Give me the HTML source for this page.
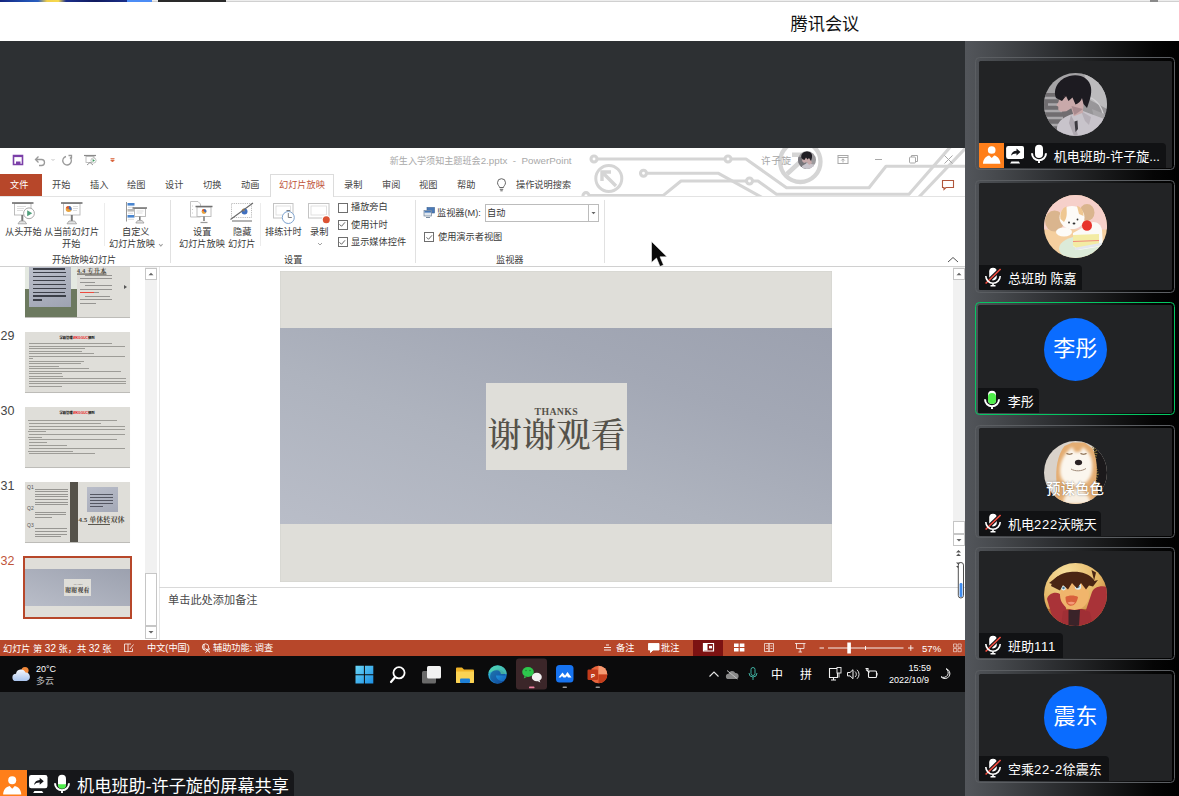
<!DOCTYPE html>
<html lang="zh-CN">
<head>
<meta charset="utf-8">
<title>腾讯会议</title>
<style>
*{box-sizing:border-box;margin:0;padding:0}
html,body{width:1179px;height:796px;overflow:hidden}
body{position:relative;background:#2d3033;font-family:"Liberation Sans","Noto Sans CJK SC",sans-serif;color:#444}
.abs{position:absolute}
.t{position:absolute;white-space:nowrap;line-height:1;}
.c{transform:translateY(-40%)}
.rt{font-size:9.200px;color:#3a3a3a}
.cb{position:absolute;width:10px;height:10px;border:1px solid #6e6e6e;background:#fff}
.cb svg{position:absolute;left:-0.500px;top:-0.500px}
.sb{position:absolute;background:#fff;border:1px solid #c6c6c6}
.sb svg{position:absolute;left:0;top:0}
.th{position:absolute;left:25px;width:105px;height:59.500px;background:#dfded9;box-shadow:0 0.500px 0.500px #bdbcb8;overflow:hidden}
.num{font-size:12.500px;color:#454545}
.ln i{position:absolute;display:block;background:currentColor;opacity:.9}
.dg{font-size:10px}
.st{font-size:9.200px;color:#fff}
.dd{display:inline-block;width:2.6px;height:2.6px;border-right:0.8px solid #999;border-bottom:0.8px solid #999;transform:rotate(45deg) translate(1.5px,-3.5px);margin-left:1.5px}
.tab{font-size:9.2px;color:#444}
/* top */
#topbar{left:0;top:0;width:1179px;height:41px;background:#fff}
#title{left:790.500px;top:16px;font-size:17.200px;color:#111;letter-spacing:0}
/* ppt window */
#ppt{left:0;top:148px;width:965px;height:507px;background:#fff;overflow:hidden}
/* taskbar */
#taskbar{left:0;top:655.700px;width:965px;height:36px;background:#0b0b0c}
/* sidebar */
#side{left:965px;top:41px;width:214px;height:755px;background:linear-gradient(90deg,#53565b 0%,#46494d 15%,#2e3033 40%,#18191a 65%,#050505 88%,#000 100%)}
.card{position:absolute;left:975px;width:200px;height:113px;border:1px solid #5b5e62;border-radius:4.500px}
.card.g{border:1.600px solid #05c763}
.card .in{position:absolute;left:2.500px;top:2.500px;right:2px;bottom:1.300px;background:#222325;border-radius:1.500px;overflow:hidden}
.card.g .in{left:2.200px;top:2.200px;right:1.700px;bottom:1px}
.av{position:absolute;left:65.500px;top:12.300px;width:63px;height:63px}
.bl{position:absolute;left:65.500px;top:12.300px;width:63px;height:63px;border-radius:50%;background:#0a6cff;color:#fff;font-size:22px;line-height:62px;text-align:center}
.lb{position:absolute;left:0;bottom:0;height:25px;background:#111214;border-top-right-radius:4px}
.ds{letter-spacing:0.7px}
.nm{font-size:13px;color:#fff;top:12.100px}
</style>
</head>
<body>
<div id="topbar" class="abs"></div>
<div id="title" class="t">腾讯会议</div>

<div id="ppt" class="abs"></div>
<!-- circuit decoration -->
<svg class="abs" style="left:0;top:148px" width="965" height="48" viewBox="0 148 965 48" fill="none" stroke="#d5d5d5" stroke-width="3.1" stroke-linejoin="round">
  <path d="M597 159H725M731 159H746L786.5 187.7H869L886 166.2H966"/>
  <circle cx="594" cy="159" r="3"/><circle cx="728" cy="159" r="3"/>
  <path d="M646.5 173.3H718.5L763 198"/>
  <circle cx="643.5" cy="173.3" r="3"/>
  <path d="M589 195.6H663L681 181H746.400M752.600 181H758L776.500 194.300H909L952 145"/>
  <circle cx="586" cy="195.6" r="3"/><circle cx="749.5" cy="181" r="3"/>
  <path d="M919 197L966 147.7"/>
  <circle cx="608.8" cy="178.4" r="13" stroke-width="3"/>
  <path d="M616 186L603 173M602 181V172H611" stroke-width="3.4" stroke-linejoin="miter"/>
  <circle cx="800.3" cy="161.8" r="20.2" stroke-width="4.3"/>
  <path d="M787 174L806 156.500M792 154.800H807.500V169" stroke-width="4.6" stroke-linejoin="miter"/>
</svg>
<div class="abs" style="left:0;top:196px;width:965px;height:1px;background:#e3e3e3"></div>
<!-- quick access -->
<svg class="abs" style="left:0;top:148px" width="160" height="26" viewBox="0 148 160 26" fill="none">
  <path d="M13.5 155.5h9v9h-9z" stroke="#7b3fa8" stroke-width="1.6"/><rect x="14" y="155.5" width="8" height="1.6" fill="#7b3fa8"/><rect x="16" y="161.5" width="4.5" height="3" fill="#7b3fa8"/>
  <path d="M36 159.5h5.5a3 3 0 0 1 0 6H39M38.5 156.5L35.5 159.5L38.5 162.5" stroke="#9a9a9a" stroke-width="1.3"/>
  <path d="M51.5 159l1.5 1.5 1.5-1.5" stroke="#b5b5b5" stroke-width="0.8"/>
  <path d="M66 156.5a4.3 4.3 0 1 0 4 1M68.5 155.5h3v3" stroke="#9a9a9a" stroke-width="1.3"/>
  <path d="M84 155.5h12" stroke="#8a8a8a" stroke-width="1.2"/><rect x="86" y="156.5" width="8" height="6" stroke="#b0b0b0" stroke-width="0.8"/><path d="M87 165l3-2.5 3 2.5" stroke="#8a8a8a" stroke-width="0.9"/><circle cx="93.5" cy="160.5" r="2.6" fill="#fff" stroke="#9a9a9a" stroke-width="0.6"/><path d="M92.6 159v3l2.4-1.5z" fill="#3a9a5c"/>
  <path d="M110.5 158.5h4M110.7 160h3.6l-1.8 2z" stroke="#d9623a" stroke-width="0.8" fill="#d9623a"/>
</svg>
<div class="t c" style="left:389.7px;top:159.8px;font-size:9.1px;color:#a9a9a9">新生入学须知主题班会<span style="font-size:9.8px">2.pptx&nbsp; -&nbsp; PowerPoint</span></div>
<div class="t c" style="left:761px;top:160px;font-size:9.6px;color:#a5a5a5;letter-spacing:0.6px">许子旋</div>
<svg class="abs" style="left:798.3px;top:150.6px" width="18" height="18" viewBox="0 0 18 18"><defs><clipPath id="ca"><circle cx="9" cy="9" r="9"/></clipPath></defs><g clip-path="url(#ca)"><rect width="18" height="18" fill="#9c9a9d"/><rect x="0" y="6" width="8" height="12" fill="#77757a"/><path d="M4 15l5-3 9 2v4H4z" fill="#c9c5cc"/><path d="M5 6l-1 4 2 2 3-1 2 3 3-2-2-6z" fill="#c7a9aa"/><path d="M3.5 7c-1-3 1-6 5-6.5 3-.5 5 1 5.5 3.5.3 2-.3 4-1 6l-2-3-1.5 1.500-1.5-2-1.5 2.5-1.500-.5z" fill="#1f1d23"/></g></svg>
<svg class="abs" style="left:830px;top:150px" width="134" height="44" viewBox="830 150 134 44" fill="none" stroke="#a8a8a8" stroke-width="1">
  <rect x="838" y="155.5" width="10" height="8"/><path d="M838 157.5h10M843 162.5v-3.5M841.3 160.5l1.7-1.7 1.7 1.7"/>
  <path d="M875 159.5h7"/>
  <rect x="909.5" y="157" width="6" height="6" rx="1"/><path d="M911.5 157v-1.5h6v6h-2"/>
  <path d="M944.5 155.5l8 8M952.5 155.5l-8 8"/>
  <path d="M942.5 180.5h11v7h-7.5l-2 2v-2h-1.5z" stroke="#b0563c" stroke-width="1.1"/>
</svg>
<!-- tabs -->
<div class="abs" style="left:0;top:174px;width:42px;height:22px;background:#b7472a"></div>
<div class="t c tab" style="left:10px;top:185px;color:#fff">文件</div>
<div class="t c tab" style="left:52px;top:185px">开始</div>
<div class="t c tab" style="left:90px;top:185px">插入</div>
<div class="t c tab" style="left:127px;top:185px">绘图</div>
<div class="t c tab" style="left:165px;top:185px">设计</div>
<div class="t c tab" style="left:203px;top:185px">切换</div>
<div class="t c tab" style="left:241px;top:185px">动画</div>
<div class="abs" style="left:270px;top:173.5px;width:64px;height:23.5px;background:#fff;border:1px solid #dcdcdc;border-bottom:none"></div>
<div class="t c tab" style="left:279px;top:185px;color:#c0553a">幻灯片放映</div>
<div class="t c tab" style="left:344px;top:185px">录制</div>
<div class="t c tab" style="left:382px;top:185px">审阅</div>
<div class="t c tab" style="left:419px;top:185px">视图</div>
<div class="t c tab" style="left:457px;top:185px">帮助</div>
<svg class="abs" style="left:495px;top:176px" width="14" height="17" viewBox="495 176 14 17" fill="none" stroke="#555" stroke-width="0.9"><path d="M499.5 187.5c0-1.6-2-2.3-2-4.8a4 4 0 0 1 8 0c0 2.500-2 3.200-2 4.800zM499.800 189.300h3.400M500.300 190.800h2.400"/></svg>
<div class="t c tab" style="left:516px;top:185px">操作说明搜索</div>
<!-- ribbon -->
<div class="abs" style="left:0;top:265.5px;width:965px;height:1.2px;background:#d0d0d0"></div>
<div class="abs" style="left:104px;top:203px;width:1px;height:43px;background:#ececec"></div>
<div class="abs" style="left:170px;top:200px;width:1px;height:63px;background:#e1e1e1"></div>
<div class="abs" style="left:260px;top:203px;width:1px;height:43px;background:#ececec"></div>
<div class="abs" style="left:415px;top:200px;width:1px;height:63px;background:#e1e1e1"></div>
<div class="abs" style="left:604px;top:200px;width:1px;height:63px;background:#e1e1e1"></div>
<svg class="abs" style="left:0;top:198px" width="340" height="32" viewBox="0 198 340 32" fill="none">
  <!-- from beginning -->
  <rect x="14.5" y="203.5" width="16.5" height="11.5" fill="#fff" stroke="#b5b5b5" stroke-width="0.9"/>
  <path d="M17 206.500h9M17 208.500h7M17 210.500h6" stroke="#d4d4d4" stroke-width="0.8"/>
  <path d="M12 203h21.500" stroke="#707070" stroke-width="1.600"/>
  <path d="M22.300 215v6" stroke="#7a7a7a" stroke-width="2"/>
  <path d="M18 223.800l2-2.800h4.600l2 2.800z" fill="#e4e4e4" stroke="#9a9a9a" stroke-width="0.8"/>
  <circle cx="29" cy="213.300" r="5.400" fill="#fff" stroke="#a0a0a0" stroke-width="0.9"/>
  <path d="M27.200 210.300v6l5-3z" fill="#4f9e7b"/>
  <!-- from current -->
  <rect x="63.500" y="203.500" width="16.500" height="11.500" fill="#fff" stroke="#b5b5b5" stroke-width="0.900"/>
  <path d="M73 206.500h5M73 208.500h5M73 210.500h4" stroke="#d4d4d4" stroke-width="0.800"/>
  <path d="M61 203h21.500" stroke="#707070" stroke-width="1.600"/>
  <circle cx="68.700" cy="209" r="3" fill="#e8a33d"/><path d="M68.700 209v-3a3 3 0 0 1 2.600 4.500z" fill="#3f6fc0"/><path d="M68.700 209l-2.800-1a3 3 0 0 1 2.800-2z" fill="#d9502f"/>
  <path d="M71.800 215v6" stroke="#7a7a7a" stroke-width="2"/>
  <path d="M67 223.800l2-2.800h5.600l2 2.800z" fill="#e4e4e4" stroke="#9a9a9a" stroke-width="0.800"/>
  <!-- custom -->
  <path d="M126.500 202v19.500" stroke="#8a8a8a" stroke-width="0.900"/>
  <rect x="127.500" y="203" width="7" height="2.600" fill="#4a86d0"/><rect x="127.500" y="209" width="7" height="2.600" fill="#b9b9b9"/><rect x="127.500" y="215" width="7" height="2.600" fill="#4a86d0"/>
  <path d="M128 207.300h6M128 213.300h5M128 219.300h6" stroke="#cfcfcf" stroke-width="0.800"/>
  <rect x="134.500" y="208.500" width="11" height="8" fill="#fff" stroke="#b5b5b5" stroke-width="0.900"/>
  <path d="M136.500 211h7M136.500 213h6" stroke="#d4d4d4" stroke-width="0.800"/>
  <path d="M132.500 208h14.500" stroke="#707070" stroke-width="1.500"/>
  <path d="M139.800 216.500v4" stroke="#7a7a7a" stroke-width="1.600"/>
  <path d="M135.800 223l1.800-2.400h4.600l1.800 2.400z" fill="#e4e4e4" stroke="#9a9a9a" stroke-width="0.800"/>
  <!-- setup -->
  <path d="M190.500 201.500h7.500l2.500 2.500v13h-10z" fill="#fff" stroke="#bdbdbd" stroke-width="0.900"/>
  <path d="M192 206h2M192 209.500h2M192 213h2" stroke="#c4c4c4" stroke-width="0.900" stroke-dasharray="1 1"/>
  <rect x="197" y="207" width="14" height="9.500" fill="#fff" stroke="#b5b5b5" stroke-width="0.900"/>
  <path d="M195.500 206.500h17" stroke="#707070" stroke-width="1.500"/>
  <circle cx="204" cy="211.500" r="2.400" fill="#e8a33d"/><path d="M204 211.500v-2.400a2.400 2.400 0 0 1 2 3.700z" fill="#3f6fc0"/><path d="M204 211.500l-2.200-.9a2.400 2.400 0 0 1 2.200-1.500z" fill="#d9502f"/>
  <path d="M204 216.500v4.500" stroke="#7a7a7a" stroke-width="1.500"/>
  <path d="M200.500 222.500h7" stroke="#9a9a9a" stroke-width="1.200"/>
  <!-- hide -->
  <rect x="231.500" y="203.500" width="20" height="14" fill="#fff" stroke="#a9a9a9" stroke-width="0.800" stroke-dasharray="1.200 1"/>
  <circle cx="244.500" cy="211.500" r="3" fill="#3f6fc0"/><path d="M244.500 211.500l-2.800-1.200a3 3 0 0 1 2.400-1.800z" fill="#e8a33d"/>
  <path d="M232 221h20M230.500 219.500L253 203" stroke="#6a6a6a" stroke-width="1.100"/>
  <!-- rehearse -->
  <rect x="273.500" y="203.500" width="19.500" height="14.500" fill="#fff" stroke="#c4c4c4" stroke-width="1"/>
  <rect x="276" y="206" width="14.500" height="9" fill="#fff" stroke="#dadada" stroke-width="0.800"/>
  <circle cx="288.300" cy="217.500" r="6" fill="#fff" stroke="#7ea3cf" stroke-width="1"/>
  <path d="M288.300 213v4.500h3.500M286.500 210.500h3.600" stroke="#6f6f6f" stroke-width="0.900"/>
  <!-- record -->
  <rect x="308.500" y="203.500" width="20.500" height="14.500" fill="#fff" stroke="#c4c4c4" stroke-width="1"/>
  <rect x="311" y="206" width="15.500" height="9" fill="#fff" stroke="#dadada" stroke-width="0.800"/>
  <circle cx="326.300" cy="219.700" r="4.600" fill="#fff"/><circle cx="326.300" cy="219.700" r="3.500" fill="#dc5334"/>
</svg>
<div class="t c rt" style="left:5px;top:232px">从头开始</div>
<div class="t c rt" style="left:44px;top:232px">从当前幻灯片</div>
<div class="t c rt" style="left:62px;top:243.500px">开始</div>
<div class="t c rt" style="left:122px;top:232px">自定义</div>
<div class="t c rt" style="left:109px;top:243.500px">幻灯片放映<span class="dd"></span></div>
<div class="t c rt" style="left:193px;top:232px">设置</div>
<div class="t c rt" style="left:179px;top:243.500px">幻灯片放映</div>
<div class="t c rt" style="left:233px;top:232px">隐藏</div>
<div class="t c rt" style="left:228px;top:243.500px">幻灯片</div>
<div class="t c rt" style="left:265px;top:232px">排练计时</div>
<div class="t c rt" style="left:310px;top:232px">录制</div>
<svg class="abs" style="left:316px;top:241px" width="8" height="6" fill="none" stroke="#8a8a8a" stroke-width="0.800"><path d="M2 2l2 2 2-2"/></svg>
<div class="cb" style="left:337.500px;top:202.500px"></div>
<div class="cb" style="left:337.500px;top:219.500px"><svg width="9" height="9" fill="none" stroke="#555" stroke-width="0.900"><path d="M1.500 4.300l2 2 3.500-4"/></svg></div>
<div class="cb" style="left:337.500px;top:237px"><svg width="9" height="9" fill="none" stroke="#555" stroke-width="0.900"><path d="M1.500 4.300l2 2 3.500-4"/></svg></div>
<div class="t c rt" style="left:351px;top:207px">播放旁白</div>
<div class="t c rt" style="left:351px;top:224.500px">使用计时</div>
<div class="t c rt" style="left:351px;top:242px">显示媒体控件</div>
<div class="t c rt" style="left:52px;top:259.500px">开始放映幻灯片</div>
<div class="t c rt" style="left:284px;top:259.500px">设置</div>
<div class="t c rt" style="left:496px;top:259.500px">监视器</div>
<svg class="abs" style="left:423px;top:206px" width="13" height="13" viewBox="423 206 13 13"><rect x="427" y="207.500" width="7.500" height="5.500" fill="#4a7ab8" stroke="#39608f" stroke-width="0.600"/><rect x="424" y="210.500" width="7.500" height="5.500" fill="#dfe6ee" stroke="#6b7f96" stroke-width="0.700"/><rect x="424.500" y="211" width="6.500" height="1.600" fill="#4a7ab8"/><path d="M426 217.500h4" stroke="#6b7f96" stroke-width="0.900"/></svg>
<div class="t c rt" style="left:437px;top:213px">监视器(M):</div>
<div class="abs" style="left:484.500px;top:204px;width:114px;height:18px;border:1px solid #bcbcbc;background:#fff"></div>
<div class="abs" style="left:588px;top:204px;width:1px;height:18px;background:#bcbcbc"></div>
<svg class="abs" style="left:590px;top:210px" width="8" height="6"><path d="M1.500 2h4l-2 2.200z" fill="#666"/></svg>
<div class="t c rt" style="left:487px;top:213px">自动</div>
<div class="cb" style="left:424px;top:232px"><svg width="9" height="9" fill="none" stroke="#555" stroke-width="0.900"><path d="M1.500 4.300l2 2 3.500-4"/></svg></div>
<div class="t c rt" style="left:438px;top:237px">使用演示者视图</div>
<svg class="abs" style="left:946px;top:255px" width="14" height="9" fill="none" stroke="#555" stroke-width="1"><path d="M2 7l5-4.500 5 4.500"/></svg>

<!-- thumbnails panel -->
<div class="abs" style="left:158.500px;top:267px;width:1px;height:373px;background:#e6e6e6"></div>
<div class="abs" style="left:144.500px;top:267px;width:12px;height:372px;background:#f1f1f1"></div>
<div class="sb" style="left:144.500px;top:267.500px;width:12px;height:12px"><svg width="10" height="10"><path d="M2.500 6.300h5L5 3.700z" fill="#666"/></svg></div>
<div class="sb" style="left:144.500px;top:572.500px;width:12px;height:53.500px"></div>
<div class="sb" style="left:144.500px;top:626px;width:12px;height:12.500px"><svg width="10" height="10"><path d="M2.500 4h5L5 6.600z" fill="#666"/></svg></div>
<div class="th" style="top:267px;height:49.500px;background:#dfded9">
  <div class="abs" style="left:0;top:0;width:52px;height:22px;background:#e4e9e1"></div>
  <div class="abs" style="left:0;top:22px;width:52px;height:27.500px;background:#6c795f"></div>
  <div class="abs" style="left:4px;top:0;width:42px;height:40px;background:linear-gradient(160deg,#bcc0cb,#9ea3b2)"></div>
</div>
<div class="t c" style="left:77px;top:269.500px;font-size:6.100px;color:#4e4a3f;font-family:'Liberation Serif','Noto Serif CJK SC',serif;font-weight:bold;text-decoration:underline;letter-spacing:0.300px">4.4 专升本</div>
<div class="ln"><i style="left:33px;top:268.4px;width:32px;height:1.300px;color:#30333c"></i><i style="left:33px;top:272.2px;width:33px;height:1.300px;color:#30333c"></i><i style="left:33px;top:276.1px;width:33px;height:1.300px;color:#30333c"></i><i style="left:33px;top:280.0px;width:32px;height:1.300px;color:#30333c"></i><i style="left:33px;top:283.8px;width:33px;height:1.300px;color:#30333c"></i><i style="left:33px;top:287.7px;width:33px;height:1.300px;color:#30333c"></i><i style="left:33px;top:291.6px;width:32px;height:1.300px;color:#30333c"></i><i style="left:33px;top:295.4px;width:33px;height:1.300px;color:#30333c"></i><i style="left:33px;top:299.3px;width:9px;height:1.300px;color:#30333c"></i><i style="left:85px;top:274.6px;width:27px;height:0.9px;color:#8d8c88"></i><i style="left:80px;top:278.2px;width:32px;height:0.9px;color:#8d8c88"></i><i style="left:80px;top:281.6px;width:15px;height:0.9px;color:#8d8c88"></i><i style="left:85px;top:285.2px;width:27px;height:0.9px;color:#8d8c88"></i><i style="left:80px;top:288.6px;width:32px;height:0.9px;color:#8d8c88"></i><i style="left:85px;top:295.6px;width:25px;height:0.9px;color:#8d8c88"></i><i style="left:80px;top:299.2px;width:32px;height:0.9px;color:#8d8c88"></i><i style="left:80px;top:302.6px;width:16px;height:0.9px;color:#8d8c88"></i><i style="left:80px;top:292px;width:14px;height:1.200px;color:#ee3b2f"></i><i style="left:94px;top:292px;width:5px;height:1px;color:#8d8c88"></i></div>
<svg class="abs" style="left:123px;top:284px" width="5" height="6"><path d="M1 1v4l3-2z" fill="#555"/></svg>
<div class="t c num" style="left:0.500px;top:335px">29</div>
<div class="th" style="top:332px"></div>
<div class="t c" style="left:59.500px;top:338px;font-size:3.400px;font-weight:bold;color:#111;letter-spacing:-0.100px">学籍管理<span style="color:#e8201a">WKGGUC</span>细则</div>
<div class="ln"><i style="left:28.5px;top:342.8px;width:83.5px;height:1.3px;color:#96958f"></i><i style="left:29px;top:345.8px;width:96px;height:0.9px;color:#96958f"></i><i style="left:29px;top:348.2px;width:56px;height:0.9px;color:#96958f"></i><i style="left:29px;top:350.8px;width:53px;height:0.9px;color:#96958f"></i><i style="left:29px;top:353.4px;width:65px;height:0.9px;color:#96958f"></i><i style="left:29px;top:356.1px;width:96px;height:0.9px;color:#96958f"></i><i style="left:29px;top:358.2px;width:4px;height:0.9px;color:#96958f"></i><i style="left:29px;top:360.8px;width:55px;height:0.9px;color:#96958f"></i><i style="left:29px;top:363.4px;width:52px;height:0.9px;color:#96958f"></i><i style="left:29px;top:365.8px;width:30px;height:0.9px;color:#96958f"></i><i style="left:29px;top:368.4px;width:60px;height:0.9px;color:#96958f"></i><i style="left:29px;top:370.8px;width:92px;height:0.9px;color:#96958f"></i><i style="left:29px;top:373.2px;width:33px;height:0.9px;color:#96958f"></i><i style="left:29px;top:375.9px;width:34px;height:0.9px;color:#96958f"></i><i style="left:29px;top:378.4px;width:97px;height:0.9px;color:#96958f"></i><i style="left:29px;top:381.1px;width:97px;height:0.9px;color:#96958f"></i><i style="left:29px;top:383.4px;width:97px;height:0.9px;color:#96958f"></i><i style="left:29px;top:385.9px;width:33px;height:0.9px;color:#96958f"></i></div>
<div class="t c num" style="left:0.500px;top:410px">30</div>
<div class="th" style="top:407px"></div>
<div class="t c" style="left:59.500px;top:413px;font-size:3.400px;font-weight:bold;color:#111;letter-spacing:-0.100px">学籍管理<span style="color:#e8201a">WKGGUC</span>细则</div>
<div class="ln"><i style="left:28px;top:420.2px;width:89px;height:1.3px;color:#96958f"></i><i style="left:29px;top:423.1px;width:72px;height:0.9px;color:#96958f"></i><i style="left:29px;top:425.8px;width:96px;height:0.9px;color:#96958f"></i><i style="left:29px;top:428.6px;width:96px;height:0.9px;color:#96958f"></i><i style="left:28px;top:431.4px;width:18px;height:0.9px;color:#96958f"></i><i style="left:29px;top:434.1px;width:96px;height:0.9px;color:#96958f"></i><i style="left:28px;top:436.7px;width:14px;height:0.9px;color:#96958f"></i><i style="left:29px;top:439.4px;width:88px;height:0.9px;color:#96958f"></i><i style="left:29px;top:442.4px;width:18px;height:0.9px;color:#96958f"></i><i style="left:29px;top:445.1px;width:38px;height:0.9px;color:#96958f"></i><i style="left:29px;top:447.9px;width:96px;height:0.9px;color:#96958f"></i><i style="left:28px;top:450.6px;width:45px;height:0.9px;color:#96958f"></i><i style="left:29px;top:453.2px;width:66px;height:0.9px;color:#96958f"></i></div>
<div class="t c num" style="left:0.500px;top:485px">31</div>
<div class="th" style="top:482px">
  <div class="abs" style="left:45.200px;top:0;width:7.600px;height:59.500px;background:#55524a"></div>
  <div class="abs" style="left:62px;top:5px;width:30.500px;height:25px;background:linear-gradient(160deg,#b9bdc9,#a4a9b7)"></div>
</div>
<div class="t c" style="left:27px;top:487px;font-size:5px;color:#555">Q1</div>
<div class="t c" style="left:27px;top:508px;font-size:5px;color:#555">Q2</div>
<div class="t c" style="left:27px;top:525px;font-size:5px;color:#555">Q3</div>
<div class="t c" style="left:78.500px;top:520px;font-size:7.100px;color:#4e4a3f;font-family:'Liberation Serif','Noto Serif CJK SC',serif;font-weight:bold">4.5 单休转双休</div>
<div class="ln"><i style="left:35px;top:488.6px;width:32.5px;height:0.9px;color:#8f8e89"></i><i style="left:35px;top:491.2px;width:32.5px;height:0.9px;color:#8f8e89"></i><i style="left:35px;top:493.8px;width:32.5px;height:0.9px;color:#8f8e89"></i><i style="left:35px;top:496.4px;width:32.5px;height:0.9px;color:#8f8e89"></i><i style="left:35px;top:498.9px;width:32.5px;height:0.9px;color:#8f8e89"></i><i style="left:35px;top:501.6px;width:32.5px;height:0.9px;color:#8f8e89"></i><i style="left:35px;top:504.2px;width:32.5px;height:0.9px;color:#8f8e89"></i><i style="left:35px;top:511.6px;width:31px;height:0.9px;color:#8f8e89"></i><i style="left:35px;top:514.3px;width:31px;height:0.9px;color:#8f8e89"></i><i style="left:35px;top:517.1px;width:17px;height:0.9px;color:#8f8e89"></i><i style="left:35px;top:528.0px;width:32px;height:0.9px;color:#8f8e89"></i><i style="left:35px;top:530.8px;width:32px;height:0.9px;color:#8f8e89"></i><i style="left:35px;top:533.5px;width:32px;height:0.9px;color:#8f8e89"></i><i style="left:35px;top:536.3px;width:26px;height:0.9px;color:#8f8e89"></i><i style="left:90px;top:493.9px;width:23px;height:1.1px;color:#4a4d58"></i><i style="left:90px;top:496.8px;width:23px;height:1.1px;color:#4a4d58"></i><i style="left:90px;top:499.8px;width:23px;height:1.1px;color:#4a4d58"></i><i style="left:90px;top:502.6px;width:23px;height:1.1px;color:#4a4d58"></i><i style="left:90px;top:505.6px;width:13px;height:1.1px;color:#4a4d58"></i><i style="left:88px;top:524px;width:22px;height:1px;color:#4e4a3f"></i></div>
<div class="t c num" style="left:0.500px;top:560px;color:#c0553a">32</div>
<div class="abs" style="left:23px;top:555.500px;width:109px;height:63px;border:2px solid #b7472a;background:#dfded9"></div>
<div class="abs" style="left:25px;top:568.700px;width:105px;height:37px;background:linear-gradient(to top right,#b9bdc8,#9ca1af)"></div>
<div class="abs" style="left:64px;top:579px;width:26.500px;height:16.500px;background:#dfded9"></div>
<div class="t c" style="left:65px;top:588.500px;font-size:6.100px;font-weight:bold;color:#3e3c36;font-family:'Liberation Serif','Noto Serif CJK SC',serif">谢谢观看</div>
<div class="t c" style="left:73.500px;top:584px;font-size:2.200px;color:#3e3c36;font-family:'Liberation Serif',serif">THANKS</div>
<!-- main slide -->
<div class="abs" style="left:280px;top:270.5px;width:552.4px;height:311px;background:#dfded9;box-shadow:inset 0 0 0 0.5px #d2d1cd"></div>
<div class="abs" style="left:280px;top:328px;width:552.4px;height:196px;background:linear-gradient(to top right,#b9bdc8 0%,#aeb3be 40%,#a3a8b5 70%,#9ca1af 100%)"></div>
<div class="abs" style="left:486px;top:382.5px;width:141px;height:87.5px;background:#dfded9"></div>
<div class="t c" style="left:534.600px;top:410.800px;font-size:9.800px;letter-spacing:0.350px;font-weight:bold;color:#55524a;font-family:'Liberation Serif',serif">THANKS</div>
<div class="t c" style="left:487.500px;top:429px;font-size:34.400px;color:#55524a;font-family:'Noto Serif CJK SC','Liberation Serif',serif;font-weight:500">谢谢观看</div>
<div class="abs" style="left:159px;top:587px;width:806px;height:1px;background:#d9d9d9"></div>
<div class="t c" style="left:168px;top:599px;font-size:11.200px;color:#4a4a4a">单击此处添加备注</div>
<!-- right scrollbar -->
<div class="abs" style="left:952.500px;top:267px;width:12px;height:279px;background:#f1f1f1"></div>
<div class="sb" style="left:952.500px;top:267.500px;width:12px;height:12px"><svg width="10" height="10"><path d="M2.500 6.300h5L5 3.700z" fill="#666"/></svg></div>
<div class="sb" style="left:952.500px;top:521px;width:12px;height:12.500px"></div>
<div class="sb" style="left:952.500px;top:533.500px;width:12px;height:12.500px"><svg width="10" height="10"><path d="M2.500 4h5L5 6.600z" fill="#666"/></svg></div>
<svg class="abs" style="left:952px;top:548px" width="13" height="52" viewBox="952 548 13 52" fill="none"><path d="M956 552.500l2.500-2.500 2.500 2.500zM956 556l2.500-2.500 2.500 2.500z" fill="#555"/><path d="M956 562.500l2.500 2.500 2.500-2.500zM956 566l2.500 2.500 2.500-2.500z" fill="#555"/><rect x="958.300" y="562.500" width="5.200" height="35.500" rx="2.600" fill="#fff" stroke="#3c3c3c" stroke-width="0.900"/><rect x="959.600" y="583" width="2.800" height="14" rx="1.200" fill="#3f8cf0"/></svg>

<!-- status bar -->
<div class="abs" style="left:0;top:639.700px;width:965px;height:16px;background:#b7472a"></div>
<div class="abs" style="left:693.200px;top:639.700px;width:30px;height:16px;background:#7c1212"></div>
<div class="t c st" style="left:3px;top:648px">幻灯片 第 <span class="dg">32</span> 张，共 <span class="dg">32</span> 张</div>
<div class="t c st" style="left:147px;top:648px">中文(中国)</div>
<div class="t c st" style="left:213px;top:648px">辅助功能: 调查</div>
<div class="t c st" style="left:616px;top:648px">备注</div>
<div class="t c st" style="left:661px;top:648px">批注</div>
<div class="t c st" style="left:922px;top:648px;font-size:9.600px">57%</div>
<svg class="abs" style="left:0;top:640px" width="965" height="16" viewBox="0 640 965 16" fill="none" stroke="#fff" stroke-width="0.900">
  <path d="M124.500 644h3.500v7.500h-3.500zM128 644h3M128 651.500h4.500v-3M130 649l3.500-4.500" stroke-opacity="0.850"/>
  <circle cx="205.500" cy="647" r="3.200" stroke-opacity="0.900"/><path d="M204 644v6M205.500 648.500l4.500 4M210 648.500l-4.500 4" stroke-width="1"/>
  <path d="M604 647.500h7M604 650h7M606 645h3" />
  <path d="M648.500 643.500h10.500v6.500h-6l-2.500 2.500v-2.500h-2z" fill="#fff"/>
  <path d="M703.500 643.500h10v7.500h-10z" stroke-width="1.200"/><rect x="704" y="644" width="3.500" height="6.500" fill="#fff" stroke="none"/><rect x="709" y="645.800" width="3" height="2.600" fill="#fff" stroke="none"/>
  <path d="M734 643.500h4.600v3.400h-4.600zM739.800 643.500h4.600v3.400h-4.600zM734 648h4.600v3.400h-4.600zM739.800 648h4.600v3.400h-4.600z" fill="#fff" stroke="none"/>
  <path d="M764.500 643.500h4.500v8h-4.500zM769 643.500h4.500v8h-4.500zM766 646h2M766 648.500h2M770.500 646h2M770.500 648.500h2" stroke-opacity="0.850" stroke-width="0.800"/>
  <path d="M795 643.500h10.500M796.500 643.500v5h7.500v-5M800.200 648.500v3.500M798.500 652h3.500" stroke-opacity="0.850"/>
  <path d="M819.500 648h4.500M828 648h75.500M908 648h5.500M910.800 645.200v5.600M865.500 646v4" stroke-width="0.900"/>
  <rect x="847.300" y="642.500" width="3.600" height="11" fill="#fff" stroke="none"/>
  <path d="M953.500 644h3.200v3.200h-3.200zM958 644h3.200v3.200h-3.200zM953.500 648.500h3.200v3.200h-3.200zM958 648.500h3.200v3.200h-3.200z" stroke-opacity="0.800" stroke-width="0.700"/>
</svg>

<div id="taskbar" class="abs"></div>
<svg class="abs" style="left:0;top:656px" width="965" height="35" viewBox="0 656 965 35" fill="none">
  <defs>
    <linearGradient id="wg" x1="0" y1="0" x2="1" y2="1"><stop offset="0" stop-color="#6ad6f7"/><stop offset="1" stop-color="#1c8fe3"/></linearGradient>
    <linearGradient id="eg" x1="0" y1="0" x2="1" y2="1"><stop offset="0" stop-color="#3ad0c8"/><stop offset="0.500" stop-color="#1f8fd8"/><stop offset="1" stop-color="#0f56b3"/></linearGradient>
    <linearGradient id="cl" x1="0" y1="0" x2="0" y2="1"><stop offset="0" stop-color="#f4f7fc"/><stop offset="1" stop-color="#a9c4ee"/></linearGradient>
  </defs>
  <!-- weather -->
  <circle cx="25" cy="670.500" r="3.600" fill="#f2883a"/>
  <path d="M16 681a3.600 3.600 0 0 1 0-7.200 5 5 0 0 1 9.500-1.300 4.300 4.300 0 0 1 1 8.500z" fill="url(#cl)"/>
  <!-- windows -->
  <path d="M355.500 665.800h8.400v8.400h-8.400zM364.900 665.800h8.400v8.400h-8.400zM355.500 675.200h8.400v8.400h-8.400zM364.900 675.200h8.400v8.400h-8.400z" fill="url(#wg)"/>
  <!-- search -->
  <circle cx="399" cy="672.800" r="5.600" stroke="#fff" stroke-width="1.800"/><path d="M395 677.300l-4 4.700" stroke="#fff" stroke-width="2.200" stroke-linecap="round"/>
  <!-- task view -->
  <rect x="422" y="671" width="14" height="12.500" rx="1.500" fill="#6a6a6a"/><rect x="427" y="666" width="14" height="12.500" rx="1.500" fill="#f2f2f2"/>
  <!-- folder -->
  <path d="M456 668.500a1 1 0 0 1 1-1h5l2 2h9a1 1 0 0 1 1 1v11.500a1 1 0 0 1-1 1h-16a1 1 0 0 1-1-1z" fill="#f0b429"/><path d="M456 671.500h18v10.500a1 1 0 0 1-1 1h-16a1 1 0 0 1-1-1z" fill="#fbd354"/><rect x="460" y="678.500" width="10" height="4.500" rx="1" fill="#1e7fd6"/>
  <!-- edge -->
  <circle cx="497.500" cy="674.500" r="9.300" fill="url(#eg)"/><path d="M490.500 679c-1.500-5 2-9.500 7-9.500 4.500 0 7.500 2.800 8 6h-9.500c0 3 2.500 6 8 5.500-3 3.500-10.500 3.500-13.500-2z" fill="#123f86" fill-opacity="0.550"/><path d="M488.500 673c1-4.500 5-7.500 9.500-7.500 5 0 8.800 3.800 8.800 8.500h-6c0-2-1.500-3.800-4-3.800-3 0-5.500 2-8.300 2.800z" fill="#5fe0a0" fill-opacity="0.600"/>
  <!-- wechat -->
  <rect x="516" y="658.500" width="31" height="31" rx="3" fill="#3b2629"/>
  <ellipse cx="528" cy="672" rx="5.800" ry="5" fill="#2dc84d"/><path d="M524.500 676l-.8 2.600 3-1.600z" fill="#2dc84d"/>
  <ellipse cx="536.800" cy="677" rx="5" ry="4.300" fill="#f2f2f2"/><path d="M539.500 680.300l.8 2.200-2.800-1.400z" fill="#f2f2f2"/>
  <circle cx="526" cy="670.500" r="0.700" fill="#1a7c30"/><circle cx="530" cy="670.500" r="0.700" fill="#1a7c30"/>
  <rect x="529" y="686.500" width="5.500" height="1.800" rx="0.900" fill="#ee7fa0"/>
  <!-- tencent meeting -->
  <rect x="556" y="665" width="17.500" height="17.500" rx="3.500" fill="#1673f0"/><path d="M558.500 677.500l4-5 2.500 3 2.500-3.500 4 5.500h-3.500l-1-1.500-1.500 1.500h-2l-1.500-1.500-1.500 1.500z" fill="#fff"/>
  <rect x="562.500" y="686.500" width="4.500" height="1.600" rx="0.800" fill="#9a9a9a"/>
  <!-- ppt -->
  <circle cx="598.500" cy="674.500" r="8.800" fill="#e8643c"/><path d="M598.500 665.700a8.800 8.800 0 0 1 8.800 8.800h-8.800z" fill="#f59a72"/><path d="M598.500 674.500h8.800a8.800 8.800 0 0 1-8.800 8.800z" fill="#c43e1c"/>
  <rect x="587.500" y="669.500" width="10.500" height="10.500" rx="1.200" fill="#c13b1b"/>
  <rect x="595.500" y="686.500" width="4.500" height="1.600" rx="0.800" fill="#9a9a9a"/>
  <!-- tray -->
  <path d="M709.500 676.500l4.500-4.500 4.500 4.500" stroke="#e6e6e6" stroke-width="1.100"/>
  <path d="M728.500 679a2.600 2.600 0 0 1 0-5.200 3.600 3.600 0 0 1 6.800-.8 3 3 0 0 1 .6 6z" fill="#8a8a8a"/><path d="M727 670.500l10.500 8.500" stroke="#c0c0c0" stroke-width="1"/>
  <rect x="751" y="667.500" width="4" height="8" rx="2" stroke="#3fae9f" stroke-width="1"/><path d="M749 673a4 4 0 0 0 8 0M753 677v3" stroke="#3fae9f" stroke-width="1"/>
  <path d="M829.500 668.500h8v9h-8zM831 680h5M833.500 677.500v2.500" stroke="#f0f0f0" stroke-width="1.100"/><rect x="837" y="667.500" width="4" height="5.500" fill="#0b0b0c" stroke="#f0f0f0" stroke-width="0.900"/><path d="M839 673v4.500" stroke="#f0f0f0" stroke-width="0.900"/>
  <path d="M847.500 672.500h2.500l3-2.800v9l-3-2.800h-2.500z" stroke="#f0f0f0" stroke-width="1"/><path d="M855 671.500a3.500 3.500 0 0 1 0 5.500M857 669.800a6 6 0 0 1 0 9" stroke="#f0f0f0" stroke-width="0.900"/>
  <rect x="868.500" y="671" width="8" height="6.500" rx="1" stroke="#f0f0f0" stroke-width="1.100"/><path d="M877 673v2.500M866 669.500l3.500 3M865.500 668.500h2.500v2" stroke="#f0f0f0" stroke-width="1.100"/>
  <path d="M946 668.700a5 5 0 1 1-5 8 4.600 4.600 0 0 0 5-8z" stroke="#f0f0f0" stroke-width="1"/>
</svg>
<div class="t c" style="left:36px;top:668.500px;font-size:9px;color:#fff">20°C</div>
<div class="t c" style="left:36px;top:680.500px;font-size:9px;color:#bdbdbd">多云</div>
<div class="t c" style="left:591px;top:674.500px;font-size:6px;font-weight:bold;color:#fff">P</div>
<div class="t c" style="left:771px;top:674px;font-size:12px;color:#fff">中</div>
<div class="t c" style="left:800px;top:674px;font-size:12px;color:#fff">拼</div>
<div class="t c" style="left:908.500px;top:668px;font-size:9px;color:#fff">15:59</div>
<div class="t c" style="left:889px;top:680px;font-size:9px;color:#fff">2022/10/9</div>
<!--SIDE-START--><div id="side" class="abs"></div>
<div class="card" style="top:57.0px"><div class="in"><svg class="av" viewBox="0 0 63 63"><defs><clipPath id="c1"><circle cx="31.500" cy="31.500" r="31.500"/></clipPath><linearGradient id="g1" x1="0" y1="0" x2="1" y2="1"><stop offset="0" stop-color="#a9a8aa"/><stop offset="1" stop-color="#8f8d90"/></linearGradient><filter id="b1"><feGaussianBlur stdDeviation="0.7"/></filter></defs>
<g clip-path="url(#c1)"><rect width="63" height="63" fill="url(#g1)"/><g filter="url(#b1)"><rect x="0" y="20" width="30" height="43" fill="#6f6d70"/><path d="M0 25h16M4 31.500h14M0 38h18M3 45h16M6 52h10" stroke="#a9a7aa" stroke-width="2.400"/><path d="M40 0l23 12v24l-17-9z" fill="#bcbbbd"/><path d="M45 24c8 3 13 10 15 20" stroke="#d2d1d3" stroke-width="1.300" fill="none"/><path d="M48 36l15 6v12l-12-6z" fill="#a6a4a7"/></g>
<path d="M13 54c2-7 8-11 16-13l10-3 24 9v16H13z" fill="#c8c4cb"/><path d="M27 42l4 8 3 13h-4l-5-13z" fill="#aea8b0"/><path d="M30.500 48.500l3-1 .5 8.500-2.500 3z" fill="#3c3a40"/><path d="M37 38l4 10 4 4 2-8z" fill="#b5afb7"/>
<path d="M16 21l-1.500 8-2.200 3.200 2 1.500v3l2.500 2 5.500-.5 5-3 2.500 8 9-3.500 1-11-6-11z" fill="#c9a9aa"/><path d="M27.500 33l3 9 8.500-6z" fill="#a88a8e"/>
<path d="M12 25c-3.500-9 2.500-19 13.500-22 10.500-2.500 20 2 21.500 11.500 1 7-1.500 13.500-4 20.500l-3.500-4-1.500-6c-1 3-3.500 5.500-6.500 6.500l-3-7-4 3.500-2.500-5-4 5-3-1.500z" fill="#1d1b21"/><path d="M19 22.500l3 .5-1 1.500z" fill="#3a2d33"/></g></svg>
<div class="lb" style="width:187.5px"><div class="abs" style="left:0;top:0;width:25.500px;height:100%;background:#ff7f1a"><svg viewBox="0 0 25.500 24.500" width="25.50" height="24.50"><circle cx="12.700" cy="7" r="3.850" fill="#fff"/><path d="M4 20.700c0-4.500 2.800-7.600 6.200-8.300l2.500 2.700 2.500-2.700c3.400.7 6.200 3.800 6.200 8.300z" fill="#fff"/></svg></div><div class="abs" style="left:27.400px;top:1.800px"><svg viewBox="0 0 18 20" width="18.2" height="20"><rect x="0" y="1" width="18" height="13" rx="2.200" fill="#fff"/><path d="M4 18.500l1.300-2h7.400l1.300 2z" fill="#fff"/><path d="M4.800 10.800c.6-3.200 2.800-4.900 5.600-5V3.600l4 3.500-4 3.500V8.400c-2.300-.1-4 .7-5.600 2.400z" fill="#15161a"/></svg></div><div class="abs" style="left:51.700px;top:1.600px"><svg width="18" height="20" viewBox="0 0 18 20"><rect x="5" y="0.800" width="8" height="13.200" rx="4" fill="#fff"/><path d="M2 9.300a7 7 0 0 0 14 0M9 16.500v2.500" fill="none" stroke="#fff" stroke-width="2"/></svg></div><div class="t c nm" style="left:75.300px;top:12.100px">机电班助-许子旋...</div></div>
</div></div>
<div class="card" style="top:179.6px"><div class="in"><svg class="av" viewBox="0 0 63 63"><defs><clipPath id="c2"><circle cx="31.500" cy="31.500" r="31.500"/></clipPath></defs>
<g clip-path="url(#c2)"><rect width="63" height="63" fill="#f5cf9f"/><rect width="63" height="34.500" fill="#f6d0ca"/><ellipse cx="38" cy="53.500" rx="23" ry="12.500" fill="#dcebd9"/>
<ellipse cx="10.500" cy="26" rx="9.500" ry="10.500" fill="#dab58e"/><ellipse cx="43" cy="17.500" rx="7.500" ry="8.500" fill="#dab58e"/>
<ellipse cx="20" cy="37" rx="8" ry="4.500" fill="#fdfbf8"/><ellipse cx="28" cy="22.500" rx="12.500" ry="11.500" fill="#fdfbf8"/><path d="M16.500 24c-1-7 2-11 6-12.500 0 5 1.500 10-2.500 15.500z" fill="#efc791"/><path d="M33 11c4.500 1 6.500 5 6.500 10l-4.500-2z" fill="#efc791"/>
<circle cx="25" cy="27.500" r="0.900" fill="#333"/><circle cx="33.500" cy="24.500" r="0.900" fill="#333"/><ellipse cx="30" cy="28.500" rx="1.400" ry="1.100" fill="#333"/>
<path d="M29 38l20-11c5 0 8 3 9 8l1 16-24 4-6-4z" fill="#fbfaf7"/><path d="M29 40l26-1v12l-22 2.500-4-3z" fill="#f3eca4"/><path d="M29 46.500l26-1" stroke="#ee8a7a" stroke-width="1"/><path d="M31 54l27-5" stroke="#e3e7ee" stroke-width="2.400"/>
<ellipse cx="43" cy="30.500" rx="5" ry="5.300" fill="#e8332c"/></g></svg>
<div class="lb" style="width:103.5px"><div class="abs" style="left:5.300px;top:2px"><svg width="18" height="20" viewBox="0 0 18 20"><rect x="5.200" y="0.800" width="7.600" height="12.600" rx="3.800" fill="#fff"/><path d="M16.600 2L1.600 16.500" stroke="#111214" stroke-width="3.800"/><path d="M16.600 2L1.600 16.500" stroke="#f04b3e" stroke-width="1.700"/><path d="M1.800 9a7.200 7.200 0 0 0 14.400 0M9 16.200v2.300M6.500 18.700h5" fill="none" stroke="#fff" stroke-width="1.600"/></svg></div><div class="t c nm" style="left:29.500px">总班助 陈嘉</div></div>
</div></div>
<div class="card g" style="top:302.2px"><div class="in"><div class="bl">李彤</div>
<div class="lb" style="width:60.5px"><div class="abs" style="left:5.300px;top:2px"><svg width="18" height="20" viewBox="0 0 18 20"><rect x="5" y="0.800" width="8" height="13.200" rx="4" fill="#fff"/><rect x="5" y="3.0" width="8" height="11.0" rx="4" fill="#4fee4a"/><path d="M2 9.300a7 7 0 0 0 14 0M9 16.500v2.500" fill="none" stroke="#fff" stroke-width="2"/></svg></div><div class="t c nm" style="left:29.500px">李彤</div></div>
</div></div>
<div class="card" style="top:424.8px"><div class="in"><svg class="av" viewBox="0 0 63 63"><defs><clipPath id="c4"><circle cx="31.500" cy="31.500" r="31.500"/></clipPath><filter id="b4"><feGaussianBlur stdDeviation="1.600"/></filter></defs>
<g clip-path="url(#c4)"><rect width="63" height="63" fill="#d9d2ca"/><rect x="50" width="13" height="63" fill="#1b191b"/><path d="M48.500 3l3.500 8-2 10 3 12-3 10 2 9" stroke="#8d7a3a" stroke-width="3.500" stroke-dasharray="1 1.400" fill="none"/>
<path d="M11 63l1.500-22c-1-14 1-27 8-36l8-3.500h12l8 6c4 8 5.500 20 3.500 32l4 23.500z" fill="#e4ad72"/>
<g filter="url(#b4)"><path d="M16 30c0-9 4-16 8-20l4-4 3 5h5l3-5 5 5c4 5 5 12 4 19-1 9-8 15-17 15s-15-6-15-15z" fill="#fbf6ee"/><path d="M19 63c1-10 6-15 13-15s13 5 15 15z" fill="#f8efe2"/></g>
<path d="M22.500 12.500c2 1 4 1 6 0M36.500 12.500c2 1 4 1 6 0" stroke="#7a5a3a" stroke-width="1.200" fill="none"/><ellipse cx="34.500" cy="21.500" rx="3.600" ry="2.700" fill="#2a2224"/><path d="M27 28c4 2.500 10.500 2.500 15-.5" stroke="#a08a78" stroke-width="1" fill="none"/></g></svg><div class="t c" style="left:67.800px;top:59.500px;font-size:14.400px;color:#fff;font-weight:500;text-shadow:0 0 1.500px rgba(0,0,0,.5)">预谋色色</div>
<div class="lb" style="width:122px"><div class="abs" style="left:5.300px;top:2px"><svg width="18" height="20" viewBox="0 0 18 20"><rect x="5.200" y="0.800" width="7.600" height="12.600" rx="3.800" fill="#fff"/><path d="M16.600 2L1.600 16.500" stroke="#111214" stroke-width="3.800"/><path d="M16.600 2L1.600 16.500" stroke="#f04b3e" stroke-width="1.700"/><path d="M1.800 9a7.200 7.200 0 0 0 14.400 0M9 16.200v2.300M6.500 18.700h5" fill="none" stroke="#fff" stroke-width="1.600"/></svg></div><div class="t c nm" style="left:29.500px">机电<span class="ds">222</span>沃晓天</div></div>
</div></div>
<div class="card" style="top:547.4px"><div class="in"><svg class="av" viewBox="0 0 63 63"><defs><clipPath id="c5"><circle cx="31.500" cy="31.500" r="31.500"/></clipPath><radialGradient id="g5" cx="0.350" cy="0.150" r="0.900"><stop offset="0" stop-color="#f6de9c"/><stop offset="0.600" stop-color="#e4b564"/><stop offset="1" stop-color="#b7682e"/></radialGradient></defs>
<g clip-path="url(#c5)"><rect width="63" height="63" fill="url(#g5)"/><rect y="46" width="63" height="17" fill="#b0652f"/>
<path d="M3 36c1-5 8-8 13-5l6 14 3 18H11z" fill="#a93338"/><path d="M63 24c-6-2-13 0-15 5l-6 18 2 16h19z" fill="#a93338"/><path d="M19 48l8-2h11l8 3 3 14H17z" fill="#a02f35"/><path d="M24.500 47h11.500l-1 16h-10.500z" fill="#3a2329"/>
<ellipse cx="30.500" cy="32" rx="14.500" ry="15" fill="#f0b56c"/><path d="M21.500 34c3-2 9.500-2 12.500 0-1 6.500-5 9.500-8.500 8.500-3-1-4-4.500-4-8.500z" fill="#d9603c"/><path d="M23.500 39.500c2-1 5.500-1 7.500 0-1 2.500-5.500 3-7.500 0z" fill="#f59a78"/>
<circle cx="34" cy="23.500" r="3.200" fill="#dfeef2"/><circle cx="34" cy="23.500" r="1.600" fill="#4c7d96"/><circle cx="19.500" cy="25" r="2.400" fill="#dfeef2"/><circle cx="19.500" cy="25" r="1.200" fill="#4c7d96"/>
<path d="M7 23c2-8 9-13 19-14 9-1 19 1 24 8l-2.500-10 4.500 2.500-2 8.500 4-1-5 6.500-4-1-3 4-5-6.500-4 5.500-5-5.500-4 6.500-5-4.500-3 5.500z" fill="#4a2513"/><path d="M5 20l9-7-3 9z" fill="#4a2513"/></g></svg>
<div class="lb" style="width:84px"><div class="abs" style="left:5.300px;top:2px"><svg width="18" height="20" viewBox="0 0 18 20"><rect x="5.200" y="0.800" width="7.600" height="12.600" rx="3.800" fill="#fff"/><path d="M16.600 2L1.600 16.500" stroke="#111214" stroke-width="3.800"/><path d="M16.600 2L1.600 16.500" stroke="#f04b3e" stroke-width="1.700"/><path d="M1.800 9a7.200 7.200 0 0 0 14.400 0M9 16.200v2.300M6.500 18.700h5" fill="none" stroke="#fff" stroke-width="1.600"/></svg></div><div class="t c nm" style="left:29.500px">班助<span class="ds">111</span></div></div>
</div></div>
<div class="card" style="top:670.0px"><div class="in"><div class="bl">震东</div>
<div class="lb" style="width:130px"><div class="abs" style="left:5.300px;top:2px"><svg width="18" height="20" viewBox="0 0 18 20"><rect x="5.200" y="0.800" width="7.600" height="12.600" rx="3.800" fill="#fff"/><path d="M16.600 2L1.600 16.500" stroke="#111214" stroke-width="3.800"/><path d="M16.600 2L1.600 16.500" stroke="#f04b3e" stroke-width="1.700"/><path d="M1.800 9a7.200 7.200 0 0 0 14.400 0M9 16.200v2.300M6.500 18.700h5" fill="none" stroke="#fff" stroke-width="1.600"/></svg></div><div class="t c nm" style="left:29.500px">空乘<span class="ds">22-2</span>徐震东</div></div>
</div></div>
<!-- share label -->
<div class="abs" style="left:0;top:770.300px;width:294px;height:26px;background:#16171a;border-top-right-radius:5px"></div>
<div class="abs" style="left:0;top:770.300px;width:27px;height:26px;background:#ff7f1a"><div class="abs" style="left:-1.300px;top:2.400px"><svg viewBox="0 0 25.500 24.500" width="26.52" height="25.48"><circle cx="12.700" cy="7" r="3.850" fill="#fff"/><path d="M4 20.700c0-4.500 2.800-7.600 6.200-8.300l2.500 2.700 2.500-2.700c3.400.7 6.200 3.800 6.200 8.300z" fill="#fff"/></svg></div></div>
<div class="abs" style="left:29px;top:774.300px"><svg viewBox="0 0 18 20" width="18.5" height="20.5"><rect x="0" y="1" width="18" height="13" rx="2.200" fill="#fff"/><path d="M4 18.500l1.300-2h7.400l1.300 2z" fill="#fff"/><path d="M4.800 10.800c.6-3.200 2.800-4.900 5.600-5V3.600l4 3.500-4 3.500V8.400c-2.300-.1-4 .7-5.600 2.400z" fill="#15161a"/></svg></div>
<div class="abs" style="left:52.800px;top:774.200px"><svg width="18" height="20" viewBox="0 0 18 20"><rect x="5" y="0.800" width="8" height="13.200" rx="4" fill="#fff"/><path d="M5 10.3h8v0.500a4 4 0 0 1-8 0z" fill="#4fee4a"/><path d="M2 9.300a7 7 0 0 0 14 0M9 16.500v2.500" fill="none" stroke="#fff" stroke-width="2"/></svg></div>
<div class="t c" style="left:77px;top:785.200px;font-size:17.200px;color:#fff">机电班助-许子旋的屏幕共享</div>
<!--SIDE-END-->
<!-- top strip -->
<div class="abs" style="left:0;top:0;width:1179px;height:2px;background:#ededed;border-bottom:0.600px solid #d0d0d0"></div>
<div class="abs" style="left:0;top:0;width:127px;height:1.800px;background:linear-gradient(90deg,#14257e,#1f4fb0 20%,#2a5fc0 30%,#f2d04a 37%,#f6d94e 46%,#1c2f8c 52%,#101a5e 75%,#1a2f8a)"></div>
<div class="abs" style="left:127px;top:0;width:25px;height:1.800px;background:#4c8df6"></div>
<div class="abs" style="left:158px;top:0;width:68px;height:1.800px;background:#2a2a2a"></div>
<div class="abs" style="left:1150px;top:0;width:8px;height:2px;background:#8a8a8a"></div>
<!-- cursor -->
<svg class="abs" style="left:650px;top:240px" width="20" height="30" viewBox="0 0 20 30"><path d="M1.500 1.500v21l5-4.500 3.500 8.500 3.500-1.500-3.500-8.200h7z" fill="#0a0a0a" stroke="#fff" stroke-width="0.800" stroke-opacity="0.700"/></svg>
</body>
</html>
